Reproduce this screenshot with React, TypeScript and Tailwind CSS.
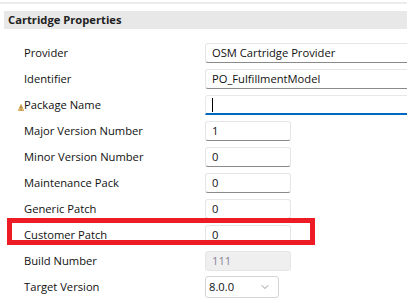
import { ChevronDown } from "lucide-react";

type Row = {
  label: string;
  value: string;
  kind: "wide" | "short" | "focus" | "disabled" | "select";
  warn?: boolean;
  marked?: boolean;
};

const rows: Row[] = [
  { label: "Provider", value: "OSM Cartridge Provider", kind: "wide" },
  { label: "Identifier", value: "PO_FulfillmentModel", kind: "wide" },
  { label: "Package Name", value: "", kind: "focus", warn: true },
  { label: "Major Version Number", value: "1", kind: "short" },
  { label: "Minor Version Number", value: "0", kind: "short" },
  { label: "Maintenance Pack", value: "0", kind: "short" },
  { label: "Generic Patch", value: "0", kind: "short" },
  { label: "Customer Patch", value: "0", kind: "short", marked: true },
  { label: "Build Number", value: "111", kind: "disabled" },
  { label: "Target Version", value: "8.0.0", kind: "select" },
];

function WarnIcon() {
  return (
    <svg width="6" height="7" viewBox="0 0 6 7" className="absolute left-[-6px] bottom-[1px]">
      <path d="M3 0.5 L5.7 6.5 L0.3 6.5 Z" fill="#f7d27a" stroke="#c08a2c" strokeWidth="0.7" />
      <rect x="2.6" y="2.3" width="0.8" height="2.4" fill="#5a3a10" />
      <rect x="2.6" y="5.2" width="0.8" height="0.8" fill="#5a3a10" />
    </svg>
  );
}

function Field({ row }: { row: Row }) {
  if (row.kind === "select") {
    return (
      <div className="w-[74px] h-[22px] border border-[#d4d4d4] rounded-[3px] bg-white flex items-center justify-between pl-[3px] pr-[7px] text-[#111]">
        <span>{row.value}</span>
        <ChevronDown size={12} strokeWidth={1.2} className="text-[#555]" />
      </div>
    );
  }
  if (row.kind === "disabled") {
    return (
      <div className="w-[86px] h-[20px] border border-[#e6e6e6] rounded-[3px] bg-[#efefef] flex items-center px-[6px] text-[#8a7f99]">
        {row.value}
      </div>
    );
  }
  if (row.kind === "focus") {
    return (
      <div className="flex-1 mr-[-8px] h-[20px] border border-[#e8e8e8] border-b-2 border-b-[#0067c0] rounded-t-[3px] bg-white flex items-center px-[6px]">
        <span className="w-px h-[14px] bg-black" />
      </div>
    );
  }
  return (
    <div
      className={
        (row.kind === "wide" ? "flex-1 mr-[-8px] " : "w-[86px] ") +
        "h-[20px] border border-[#e6e6e6] border-b-[#8a8a8a] rounded-[3px] bg-white flex items-center px-[6px] text-[#111]"
      }
    >
      {row.value}
    </div>
  );
}

export default function App() {
  return (
    <div
      className="w-[407px] h-[301px] bg-white overflow-hidden text-[11.2px] text-[#111]"
      style={{ fontFamily: '"Open Sans", "Noto Sans", sans-serif' }}
    >
      <div className="mt-[2px] h-[2px] bg-[#ececec]" />
      <div className="mt-[7px] ml-[4px] h-[18px] bg-[#e8e8e8] flex items-center px-[4px] font-bold text-[11.2px] text-[#222]">
        Cartridge Properties
      </div>
      <div className="mt-[14px] flex flex-col gap-[6px]">
        {rows.map((row) => (
          <div key={row.label} className="relative flex items-center h-[20px]">
            {row.marked && (
              <div className="absolute left-[7px] top-[-7px] w-[308px] h-[27px] border-[5px] border-[#ed1c24]" />
            )}
            <div className="w-[205px] pl-[24px] shrink-0">
              <span className="relative">
                {row.warn && <WarnIcon />}
                {row.label}
              </span>
            </div>
            <Field row={row} />
          </div>
        ))}
      </div>
    </div>
  );
}
